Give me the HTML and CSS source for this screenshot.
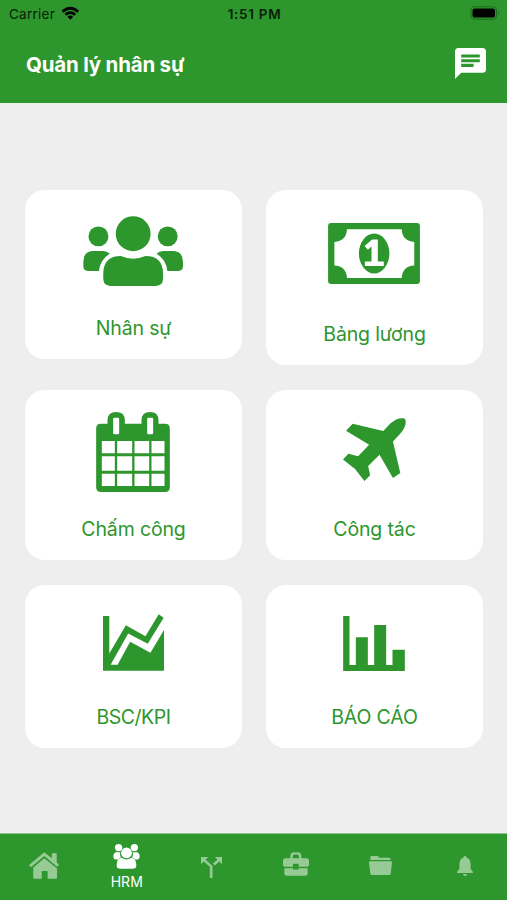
FILE: index.html
```html
<!DOCTYPE html>
<html lang="vi">
<head>
<meta charset="utf-8">
<title>Quản lý nhân sự</title>
<link rel="stylesheet" href="styles.css">
</head>
<body>
<div class="app">
  <header class="header">
    <div class="status">
      <div class="carrier"><span>Carrier</span>
        <svg class="wifi" viewBox="186 17 56 42"><path d="M187 31Q213 7 240 31L234 37Q213 19 193 37Z"/><path d="M196 40Q213 26 231 40L225 46Q213 36 202 46Z"/><path d="M205 49Q213 42 222 49L213.500 58Z"/></svg>
      </div>
      <div class="time">1:51 PM</div>
      <svg class="battery" viewBox="0 0 30 14"><rect x="1" y=".8" width="25.500" height="12.400" rx="3.800" fill="none" stroke="#1f6b20" stroke-width="1.100"/><rect x="2.500" y="2.400" width="22.500" height="9.200" rx="2.200"/><path d="M28 5q2 2 0 4z" fill="#1f6b20"/></svg>
    </div>
    <div class="titlebar">
      <h1>Quản lý nhân sự</h1>
      <svg class="chat" viewBox="2 2 20 20"><path fill="#fff" d="M20 2H4c-1.100 0-2 .9-2 2v18l4-4h14c1.100 0 2-.9 2-2V4c0-1.100-.9-2-2-2z"/><path fill="#2d962d" d="M6 6.200h12v2H6zM6 9.200h12v2H6zM6 12.200h8v2H6z"/></svg>
    </div>
  </header>

  <main class="grid">
    <section class="card card-staff">
      <svg class="i-users" viewBox="189 93 301 210"><circle cx="235.500" cy="154" r="30"/><circle cx="444" cy="154" r="30"/><circle cx="340" cy="146" r="52.500"/><path d="M221 198H250Q261 198 270 206Q241 223 237 258H204Q190 258 190 244V231Q190 198 221 198ZM458 198H430Q419 198 410 206Q439 223 443 258H476Q490 258 490 244V231Q490 198 458 198Z"/><path d="M303 213Q340 229 377 213Q430 213 430 267V281Q430 303 408 303H272Q250 303 250 281V267Q250 213 303 213Z"/></svg>
      <span>Nhân sự</span>
    </section>
    <section class="card card-pay">
      <svg class="i-money" viewBox="204 115 277 184"><path fill-rule="evenodd" d="M213 115H472Q481 115 481 124V290Q481 299 472 299H213Q204 299 204 290V124Q204 115 213 115ZM261 134Q259 170 223 172V243Q259 245 261 281H426Q428 245 464 243V172Q428 170 426 134Z"/><ellipse cx="343" cy="207" rx="46" ry="60"/><path fill="#fff" d="M337 165H354V231H372V245H315V231H335V186L324 196L314 184Z"/></svg>
      <span>Bảng lương</span>
    </section>
    <section class="card card-time">
      <svg class="i-calendar" viewBox="229 80 221 240"><path d="M243 115H263V105Q263 80 289 80Q315 80 315 105V115H365V105Q365 80 391 80Q416 80 416 105V115H436Q450 115 450 130V306Q450 320 436 320H243Q229 320 229 306V130Q229 115 243 115Z"/><path fill="#fff" d="M284 97h10q4 0 4 4v42q0 4-4 4h-10q-4 0-4-4v-42q0-4 4-4ZM386 97h10q4 0 4 4v42q0 4-4 4h-10q-4 0-4-4v-42q0-4 4-4ZM246 167h39v37h-39ZM292 167h45v37h-45ZM344 167h44v37h-44ZM395 167h39v37h-39ZM246 213h39v43h-39ZM292 213h45v43h-45ZM344 213h44v43h-44ZM395 213h39v43h-39ZM246 265h39v37h-39ZM292 265h45v37h-45ZM344 265h44v37h-44ZM395 265h39v37h-39Z"/></svg>
      <span>Chấm công</span>
    </section>
    <section class="card card-trip">
      <svg class="i-plane" viewBox="248 98 188 188"><path d="M277 115L368 137L390 114Q410 96 428 99Q436 100 435 112Q434 128 418 146L397 168L419 262L397 277L357 208L323 241L329 269L312 286L284 250L248 222L264 205L293 212L326 178L257 136Z"/></svg>
      <span>Công tác</span>
    </section>
    <section class="card card-kpi">
      <svg class="i-area" viewBox="248 102 184 170"><path d="M248 107H267V220L317 135L376 168L416 102L431 112L383 191L324 160L271 254H292L330 185L391 218L432 149V272H248Z"/></svg>
      <span>BSC/KPI</span>
    </section>
    <section class="card card-report">
      <svg class="i-bars" viewBox="250 107 185 165"><path d="M250 107H269V254H288V171H324V254H343V134H379V254H398V208H435V272H250Z"/></svg>
      <span>BÁO CÁO</span>
    </section>
  </main>

  <nav class="tabs">
    <div class="tab"><svg class="t-home" viewBox="86 70 92 81"><path d="M133 70L156 88V73H171V101L178 108L172 114L133 81L92 116L86 109Z"/><path d="M133 88L172 120V147Q172 151 168 151H143V127H125V151H104Q99 151 99 147V117Z"/></svg></div>
    <div class="tab active"><svg class="t-users" viewBox="342 47 80 76"><circle cx="358" cy="58" r="11"/><circle cx="406" cy="58" r="11"/><circle cx="382" cy="74" r="16.500"/><path d="M352 71Q358 74 363 71Q361 79 365 88Q359 90 357 94H350Q342 94 342 85Q342 73 352 71ZM412 71Q406 74 401 71Q403 79 399 88Q405 90 407 94H414Q422 94 422 85Q422 73 412 71Z"/><path d="M367 89Q382 99 397 89Q412 91 412 112Q412 122 400 122H364Q352 122 352 112Q352 91 367 89Z"/></svg><span>HRM</span></div>
    <div class="tab"><svg class="t-split" viewBox="605 87 64 64"><path d="M605 87H627L619 95L640 114V151H632V117L613 101L605 109ZM669 87H647L655 95L641 107L647 113L661 101L669 109Z"/></svg></div>
    <div class="tab"><svg class="t-case" viewBox="89 73 78 71"><path fill-rule="evenodd" d="M111 91V85Q111 73 123 73H132Q144 73 144 85V91H160Q167 91 167 98V109Q167 117 159 117H136V108H119V117H97Q89 117 89 109V98Q89 91 96 91ZM118 91H137V86Q137 80 131 80H124Q118 80 118 86Z"/><path d="M93 121H119V125H136V121H163V137Q163 144 156 144H100Q93 144 93 137Z"/></svg></div>
    <div class="tab"><svg class="t-folder" viewBox="344 84 69 57"><path d="M352 84H368Q373 84 375 89H404Q409 89 409 96H348V88Q348 84 352 84Z"/><path d="M347 100H410Q414 100 413 104L409 137Q408 141 404 141H353Q349 141 348 137L344 104Q343 100 347 100Z"/></svg></div>
    <div class="tab"><svg class="t-bell" viewBox="608 80 48 61"><path d="M628 84Q628 80 632 80Q636 80 636 84Q648 88 649 104V119L656 128V132H608V128L615 119V104Q616 88 628 84ZM626 135H638Q638 141 632 141Q626 141 626 135Z"/></svg></div>
  </nav>
</div>
</body>
</html>
```
FILE: styles.css
```css
* { box-sizing: border-box; }
body { margin: 0; font-family: Inter, "Noto Sans", sans-serif; background: #eee; }
svg { display: block; flex: none; }
.app { height: 900px; display: flex; flex-direction: column; }

.header { height: 103px; background: #2d962d; }
.status { height: 27px; padding: 0 7px 0 9px; display: grid; grid-template-columns: 1fr auto 1fr; align-items: center; color: #082108; font-size: 13.500px; }
.carrier { display: flex; align-items: center; gap: 6px; letter-spacing: .25px; }
.wifi { width: 19px; height: 14px; margin-bottom: 2px; }
.time { font-weight: 600; letter-spacing: .7px; }
.battery { width: 30px; height: 14px; justify-self: end; margin-bottom: 2px; }
.titlebar { height: 76px; padding: 0 21px 0 26px; display: flex; align-items: center; justify-content: space-between; }
h1 { margin: 0; font-size: 20.500px; font-weight: 700; line-height: 26px; color: #fff; letter-spacing: -.2px; }
.chat { width: 31px; height: 31px; margin-bottom: 3px; }

.grid { flex: 1; padding: 87px 24px 0 25px; display: grid; grid-template-columns: 217px 217px; grid-template-rows: 175px 170px 163px; row-gap: 25px; column-gap: 24px; align-content: start; align-items: start; }
.card { height: 100%; background: #fff; border-radius: 20px; display: flex; flex-direction: column; align-items: center; padding-bottom: 19px; color: #2d962d; fill: #2d962d; }
.card svg { margin-right: 1px; }
.card span { margin-top: auto; font-size: 19.500px; line-height: 24px; letter-spacing: -.15px; }
.card-staff { height: 169px; padding-top: 26px; }
.card-pay { padding-top: 33px; }
.card-time { padding-top: 22px; }
.card-trip { padding-top: 28px; }
.card-kpi { padding-top: 29px; }
.card-report { padding-top: 31px; }
.card.card-kpi span { letter-spacing: -.5px; }
.i-users { width: 100px; height: 70px; }
.i-money { width: 92px; height: 61px; }
.i-calendar { width: 74px; height: 80px; }
.i-plane { width: 63px; height: 63px; }
.i-area { width: 61px; height: 57px; }
.i-bars { width: 62px; height: 55px; }

.tabs { height: 67px; background: #2d962d; border-top: 1px solid #8fc48f; display: grid; grid-template-columns: repeat(6, 1fr); }
.tab { display: flex; flex-direction: column; align-items: center; justify-content: center; fill: #96cb96; color: #fff; }
.tab.active { justify-content: flex-start; padding-top: 10px; fill: #fff; }
.tab span { margin-top: 4px; font-size: 14px; line-height: 18px; }
.t-home { width: 30px; height: 27px; margin-left: 3px; margin-bottom: 4px; }
.t-users { width: 27px; height: 25px; }
.t-split { width: 21px; height: 21px; }
.t-case { width: 26px; height: 24px; margin-bottom: 6px; margin-left: 1px; }
.t-folder { width: 23px; height: 19px; margin-bottom: 3px; }
.t-bell { width: 16px; height: 20px; margin-bottom: 3px; }
```
